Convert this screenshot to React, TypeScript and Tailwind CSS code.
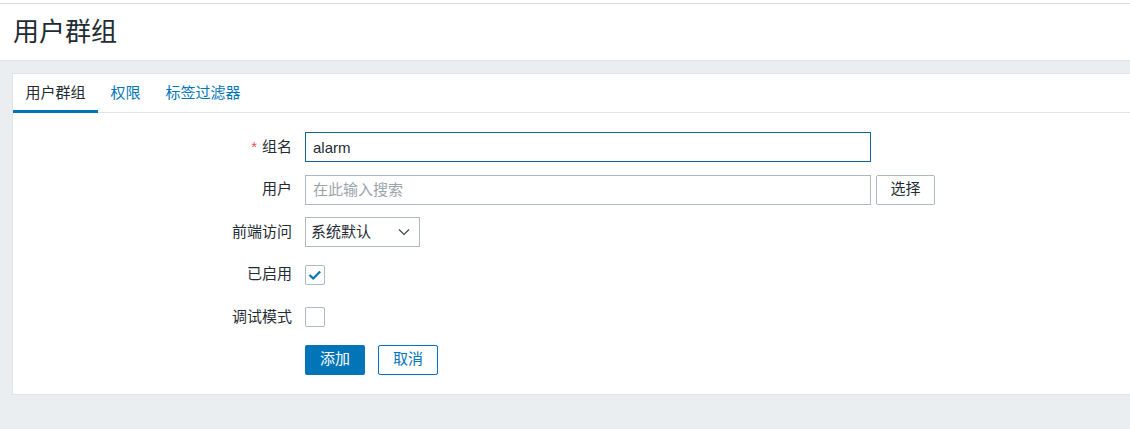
import { useState } from 'react'

const font = { fontFamily: '"Liberation Sans", "Noto Sans CJK SC", sans-serif' }

function Row({ label, required, children }: { label: string; required?: boolean; children: React.ReactNode }) {
  return (
    <div className="flex items-center h-[30px]">
      <label className="w-[292px] pr-[13px] text-right text-[15px] text-[#1f2c33] whitespace-nowrap">
        {required && <span className="text-[#e45959] mr-[5px]">*</span>}
        {label}
      </label>
      {children}
    </div>
  )
}

function Check({ on, onClick }: { on: boolean; onClick: () => void }) {
  return (
    <button onClick={onClick} className="w-[20px] h-[20px] border border-[#acbbc2] rounded-[2px] bg-white flex items-center justify-center">
      {on && (
        <svg width="18" height="18" viewBox="0 0 18 18">
          <path d="M3.5 9 L7.2 12.5 L14.2 5.4" fill="none" stroke="#0275b8" strokeWidth="2.2" />
        </svg>
      )}
    </button>
  )
}

export default function App() {
  const [tab, setTab] = useState(0)
  const [name, setName] = useState('alarm')
  const [enabled, setEnabled] = useState(true)
  const [debug, setDebug] = useState(false)
  const tabs = ['用户群组', '权限', '标签过滤器']
  return (
    <div className="min-h-[429px] bg-[#ebeef0] text-[#1f2c33]" style={font}>
      <div className="h-[3px] bg-white" />
      <div className="h-[58px] bg-white border-t border-[#dcdcdc] border-b border-b-[#dfe4e7] flex items-center px-[13px]">
        <h1 className="text-[26px] leading-none font-normal">用户群组</h1>
      </div>
      <div className="pt-[12px] pb-[34px]">
        <div className="ml-[12px] bg-white border border-r-0 border-[#dfe4e7]">
          <div className="flex h-[39px] border-b border-[#dfe4e7]">
            {tabs.map((t, i) => (
              <button
                key={t}
                onClick={() => setTab(i)}
                className={
                  'px-[12.5px] text-[15px] h-[39px] -mb-px border-b-[3px] pt-[2px] ' +
                  (tab === i ? 'border-[#0275b8] text-[#1f2c33]' : 'border-transparent text-[#0275b8]')
                }
              >
                {t}
              </button>
            ))}
          </div>
          <div className="pt-[19px] pb-[19px] flex flex-col gap-[12.5px]">
            <Row label="组名" required>
              <input
                value={name}
                onChange={e => setName(e.target.value)}
                className="w-[566px] h-[30px] border border-[#13649a] px-[7px] text-[15px] text-[#1f2c33] outline-none"
              />
            </Row>
            <Row label="用户">
              <input
                placeholder="在此输入搜索"
                className="w-[566px] h-[30px] border border-[#acbbc2] px-[7px] text-[15px] placeholder:text-[#9aa5ab] outline-none"
              />
              <button className="ml-[5px] w-[59px] h-[30px] border border-[#acbbc2] rounded-[2px] text-[15px] text-[#1f2c33] bg-white">选择</button>
            </Row>
            <Row label="前端访问">
              <div className="w-[115px] h-[30px] border border-[#acbbc2] flex items-center justify-between pl-[5px] pr-[9px] text-[15px]">
                <span>系统默认</span>
                <svg width="12" height="8" viewBox="0 0 12 8">
                  <path d="M1 1.5 L6 6.5 L11 1.5" fill="none" stroke="#3a4a52" strokeWidth="1.2" />
                </svg>
              </div>
            </Row>
            <Row label="已启用">
              <Check on={enabled} onClick={() => setEnabled(!enabled)} />
            </Row>
            <Row label="调试模式">
              <Check on={debug} onClick={() => setDebug(!debug)} />
            </Row>
            <div className="flex items-center h-[30px] pl-[292px] gap-[13px]">
              <button className="w-[60px] h-[30px] rounded-[2px] bg-[#0275b8] text-white text-[15px]">添加</button>
              <button className="w-[60px] h-[30px] rounded-[2px] border border-[#0275b8] text-[#0275b8] bg-white text-[15px]">取消</button>
            </div>
          </div>
        </div>
      </div>
    </div>
  )
}
